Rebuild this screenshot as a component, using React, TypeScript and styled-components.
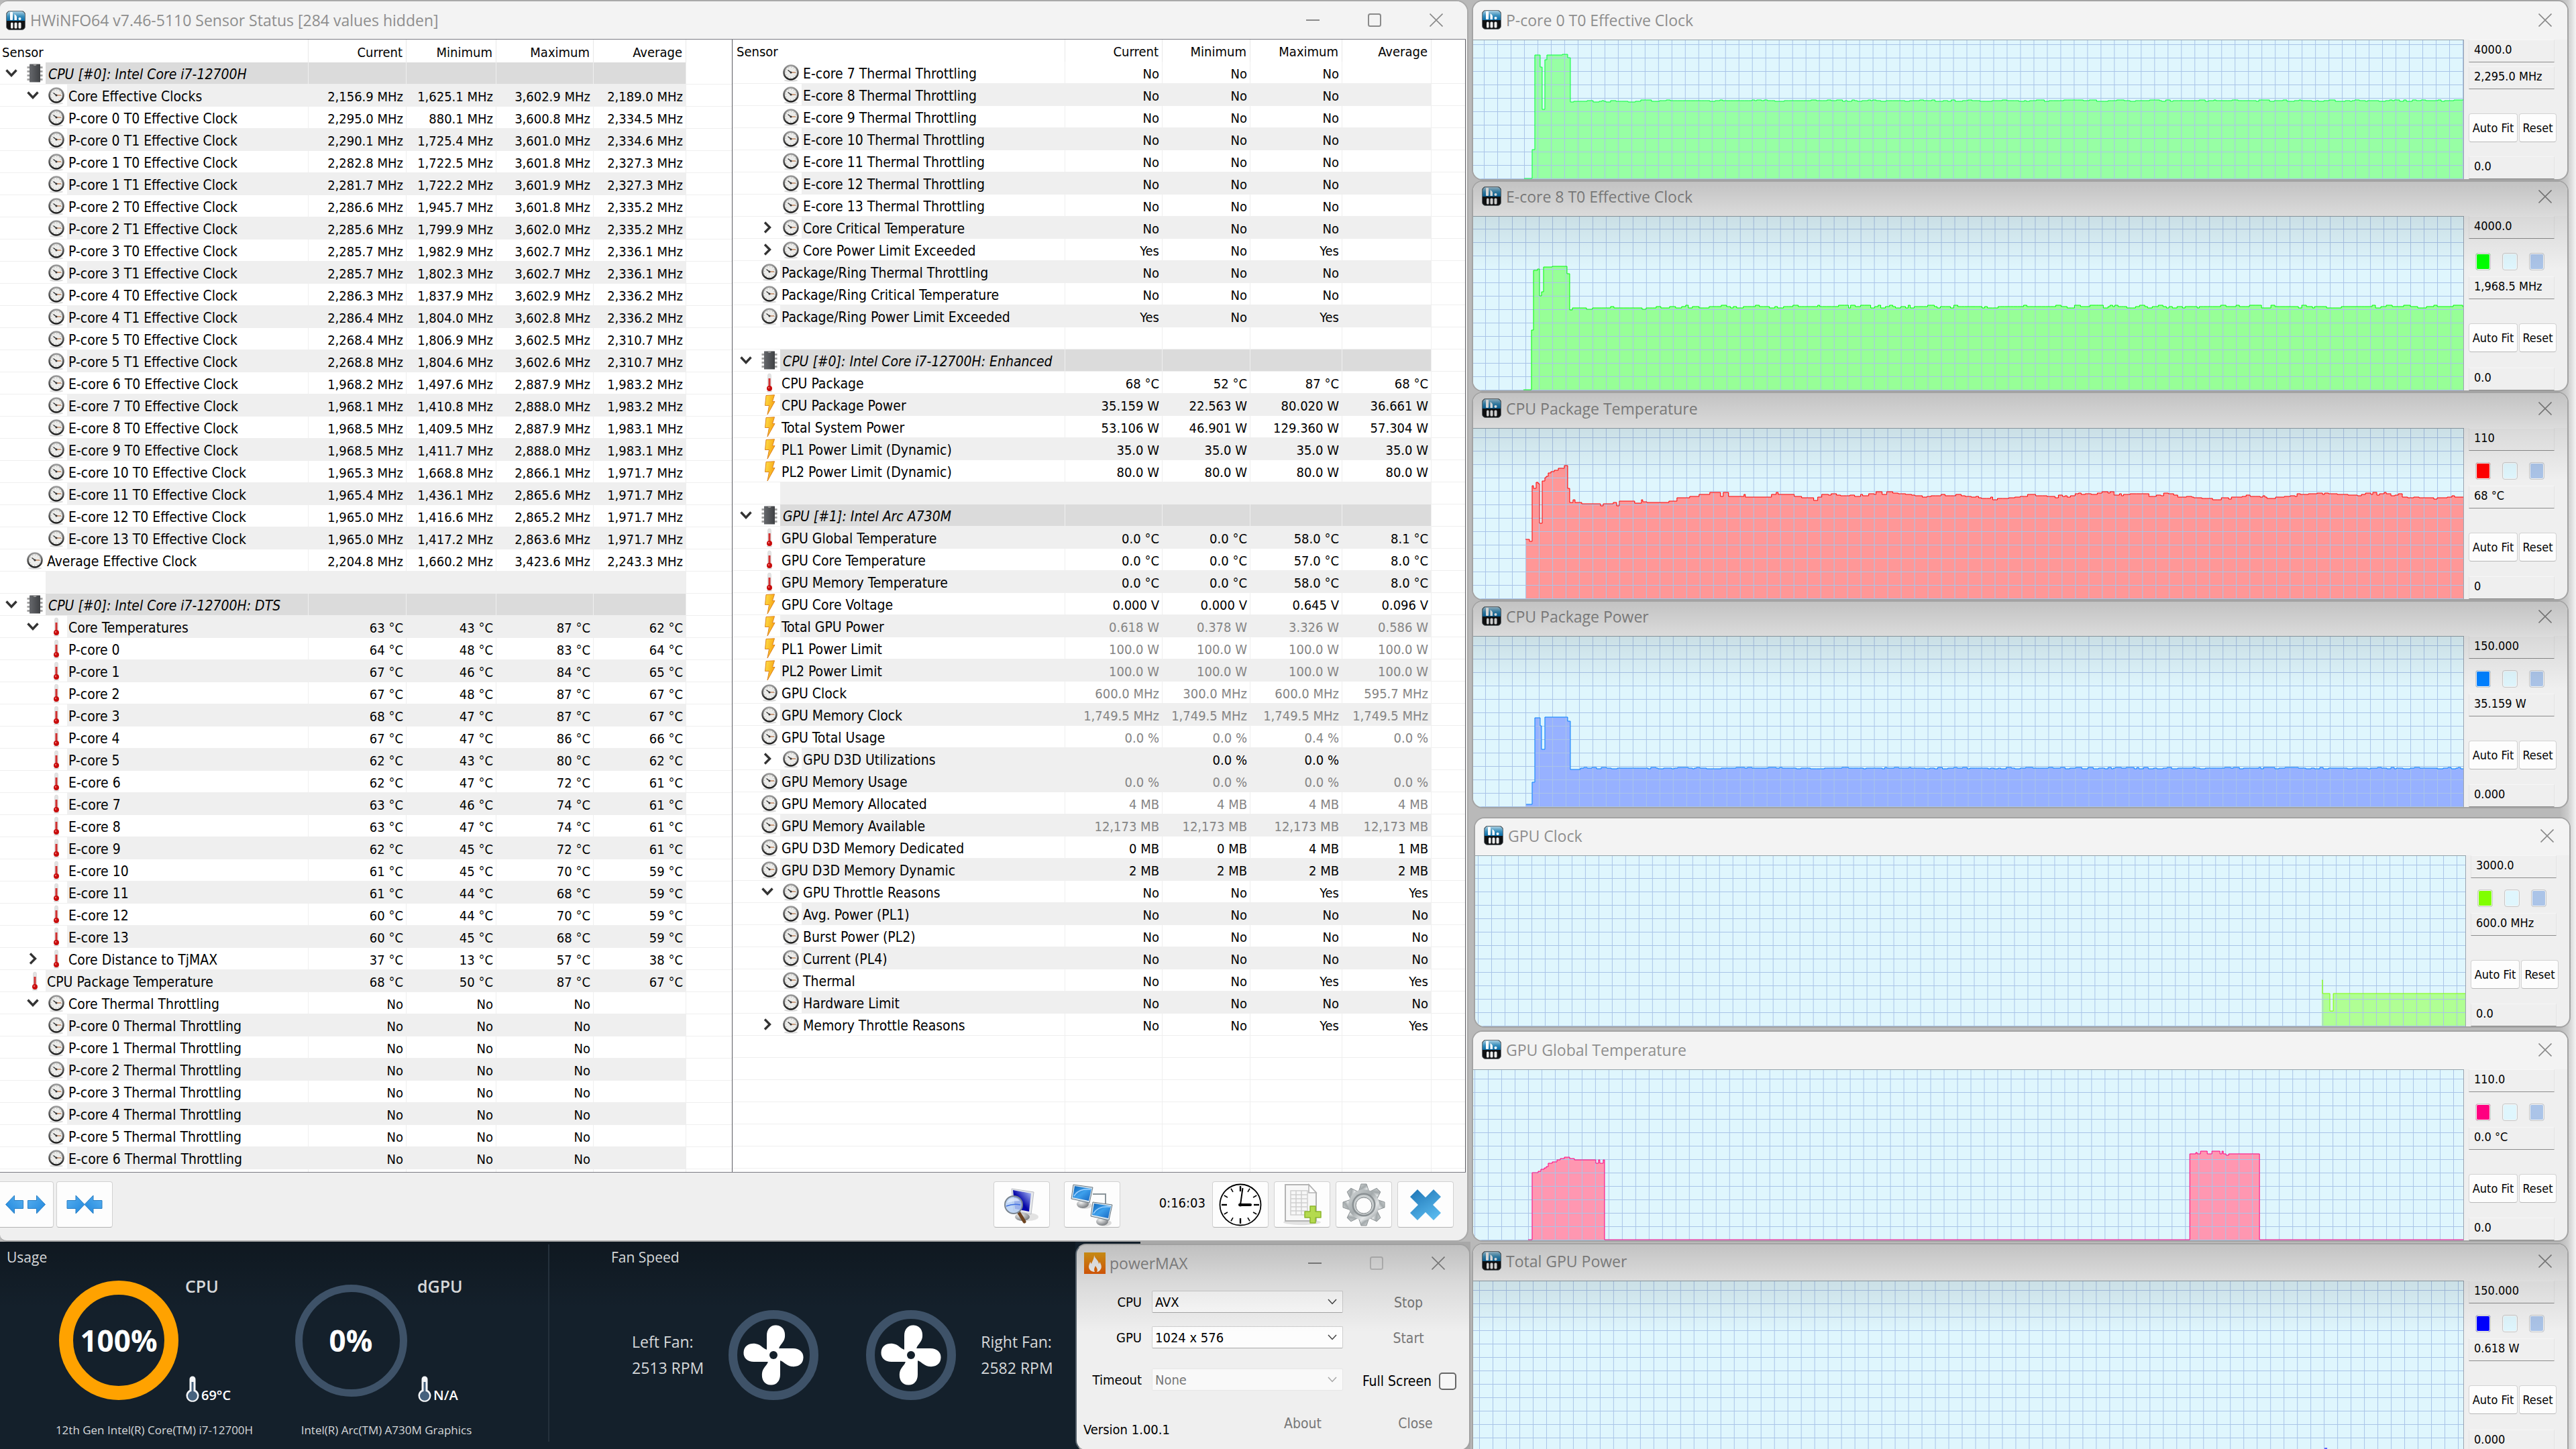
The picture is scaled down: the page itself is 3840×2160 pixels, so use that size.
import React from "react";
import styled, { createGlobalStyle, css } from "styled-components";

const uiFont = '"DejaVu Sans Condensed", Tahoma, "Noto Sans", sans-serif';
const titleFont = '"Open Sans", "Segoe UI", "Noto Sans", sans-serif';

const GlobalStyle = createGlobalStyle`
  *, *::before, *::after { box-sizing: border-box; }
  body { margin: 0; background: #b9b9b9; font-family: ${uiFont}; font-size: 20px; color: #000; }
  button, select, input { font: inherit; color: inherit; margin: 0; }
  svg { display: block; flex: none; }
`;

/* ---------- page ---------- */

const Desktop = styled.div`
  display: grid;
  grid-template-columns: 73fr 55fr;
  min-height: 100vh;
  overflow: hidden;
`;

const LeftColumn = styled.div`
  display: flex;
  flex-direction: column;
  min-width: 0;
`;

const RightColumn = styled.div`
  display: flex;
  flex-direction: column;
  min-width: 0;
  padding: 0 11px 0 4px;
  background: linear-gradient(to left, #f4f4f4 0, #cdcdcd 12px, #b9b9b9 24px);
`;

const Defs = styled.svg`
  position: absolute;
  width: 0;
  height: 0;
`;

/* ---------- shared window parts ---------- */

const TitleText = styled.h2`
  margin: 0;
  flex: 1;
  font: 400 23px/28px ${titleFont};
  color: #8e8e8e;
  white-space: nowrap;
`;

const Captions = styled.div`
  display: flex;
`;

const CaptionButton = styled.button<{ $width?: number }>`
  width: ${(p) => p.$width ?? 92}px;
  height: 28px;
  padding: 0;
  border: 0;
  background: none;
  display: flex;
  align-items: center;
  justify-content: center;
`;

const TopShade = css`
  &::after {
    content: "";
    position: absolute;
    inset: 0;
    pointer-events: none;
    background: linear-gradient(to bottom, rgba(0, 0, 0, 0.2), rgba(0, 0, 0, 0.09) 56px, rgba(0, 0, 0, 0) 130px);
  }
`;

/* ---------- main sensor window ---------- */

const MainWindow = styled.main`
  margin-right: 1px;
  border: 2px solid #a9a9a9;
  border-left: 0;
  border-radius: 12px 18px 18px 10px;
  background: #efefef;
  overflow: hidden;
`;

const MainTitle = styled.header`
  display: flex;
  align-items: center;
  gap: 7px;
  height: 56px;
  padding-left: 9px;
  background: #f3f3f3;
`;

const Panes = styled.div`
  display: grid;
  grid-template-columns: 1091fr 1094fr;
  margin-right: 2px;
  border-top: 1px solid #7b7b83;
  border-bottom: 1px solid #7b7b83;
  background: #fff;
`;

const Pane = styled.section<{ $framed?: boolean }>`
  min-width: 0;
  overflow: hidden;
  ${(p) => p.$framed && css`
    border-left: 1px solid #5c5c62;
    border-right: 1px solid #5c5c62;
  `}
`;

const SensorTable = styled.table<{ $headHeight: number; $tail: number }>`
  width: 100%;
  table-layout: fixed;
  border-collapse: separate;
  border-spacing: 0;
  line-height: 32px;
  thead tr { height: ${(p) => p.$headHeight}px; }
  tfoot tr { height: ${(p) => p.$tail}px; }
`;

const HeadCell = styled.th<{ $start?: number }>`
  padding: 3px 5px 0 ${(p) => p.$start ?? 0}px;
  font-weight: 400;
  text-align: ${(p) => (p.$start === undefined ? "right" : "left")};
  border-right: 1px solid #e8e8e8;
  line-height: 28px;
`;

type Tone = "plain" | "stripe" | "group";
const toneColor: Record<Tone, string> = { plain: "#ffffff", stripe: "#efefef", group: "#dbdbdb" };

const Row = styled.tr`
  height: 33px;
`;

const NameCell = styled.td`
  padding: 0;
  height: 33px;
  border-bottom: 1px solid #efefef;
`;

const NameLine = styled.div`
  display: flex;
  height: 32px;
`;

const Gutter = styled.div<{ $width: number }>`
  flex: none;
  width: ${(p) => p.$width}px;
  padding-right: 4px;
  display: flex;
  justify-content: flex-end;
  align-items: center;
`;

const IconSlot = styled.span`
  width: 24px;
  display: flex;
  justify-content: center;
`;

const Twisty = styled.button`
  width: 22px;
  height: 28px;
  margin-right: 12px;
  padding: 0;
  border: 0;
  background: none;
  display: flex;
  align-items: center;
  justify-content: center;
`;

const Label = styled.div<{ $tone: Tone }>`
  flex: 1;
  min-width: 0;
  padding-left: ${(p) => (p.$tone === "group" ? 4 : 2)}px;
  border-right: 1px solid #efefef;
  background: ${(p) => toneColor[p.$tone]};
  font-size: 21px;
  line-height: 36px;
  font-style: ${(p) => (p.$tone === "group" ? "italic" : "normal")};
  white-space: nowrap;
  overflow: hidden;
`;

const ValueCell = styled.td<{ $tone: Tone; $dim?: boolean }>`
  padding: 4px 4px 0 0;
  text-align: right;
  white-space: nowrap;
  line-height: 28px;
  color: ${(p) => (p.$dim ? "#858585" : "#000")};
  background: ${(p) => toneColor[p.$tone]};
  border-right: 1px solid #efefef;
  border-bottom: 1px solid #efefef;
`;

const SpareCell = styled.td`
  padding: 0;
  border-bottom: 1px solid #efefef;
`;

const TailCell = styled.td`
  padding: 0;
  border-right: 1px solid #efefef;
  &:last-child { border-right: 0; }
`;

const Toolbar = styled.footer`
  display: flex;
  align-items: center;
  justify-content: space-between;
  height: 101px;
  padding: 0 20px 6px 0;
`;

const ToolGroup = styled.div<{ $gap: number }>`
  display: flex;
  align-items: center;
  gap: ${(p) => p.$gap}px;
`;

const ToolButton = styled.button<{ $flush?: boolean }>`
  width: ${(p) => (p.$flush ? 80 : 84)}px;
  height: 69px;
  padding: 0 ${(p) => (p.$flush ? 4 : 0)}px 0 0;
  border: 1px solid #d2d2d2;
  border-bottom-color: #b4b4b4;
  border-left-width: ${(p) => (p.$flush ? 0 : 1)}px;
  border-radius: ${(p) => (p.$flush ? "0 4px 4px 0" : "4px")};
  background: #fdfdfd;
  display: flex;
  align-items: center;
  justify-content: center;
`;

const Elapsed = styled.time`
  padding: 0 2px 6px 50px;
`;

/* ---------- dark control centre ---------- */

const Lower = styled.div`
  position: relative;
  z-index: 1;
  flex: 1;
  display: flex;
  margin-right: -2px;
  background: linear-gradient(to right, #14202b 1700px, #a8a8a8 1700px);
`;

const Control = styled.section`
  flex: 1;
  display: grid;
  grid-template-columns: 819px 1fr;
  padding: 4px 0 16px;
  color: #d6d8da;
  font-family: ${titleFont};
  background: linear-gradient(to bottom, rgba(0, 0, 0, 0.25), rgba(0, 0, 0, 0) 100px);
`;

const ControlPart = styled.div<{ $inset: number; $ruled?: boolean }>`
  border-right: ${(p) => (p.$ruled ? "2px solid #25313c" : "0")};
  h3 {
    margin: 4px 0 0 ${(p) => p.$inset}px;
    font: 400 21px/30px ${titleFont};
  }
`;

const Gauges = styled.div`
  display: flex;
  gap: 62px;
  padding: 14px 0 0 88px;
`;

const Gauge = styled.figure`
  margin: 0;
  width: 284px;
  display: flex;
  flex-direction: column;
  align-items: center;
  gap: 27px;
  figcaption { font-size: 17px; line-height: 24px; white-space: nowrap; }
`;

const GaugeTop = styled.div`
  align-self: stretch;
  display: flex;
  align-items: center;
  gap: 10px;
`;

const GaugeSide = styled.div`
  height: 190px;
  display: flex;
  flex-direction: column;
  justify-content: space-between;
  strong { font-weight: 600; font-size: 25px; line-height: 28px; }
`;

const Heat = styled.span`
  display: flex;
  align-items: flex-end;
  gap: 2px;
  font-weight: 600;
  font-size: 20px;
  line-height: 26px;
  color: #fff;
`;

const Ring = styled.div<{ $size: number; $stroke: number; $color: string }>`
  width: ${(p) => p.$size}px;
  height: ${(p) => p.$size}px;
  border: ${(p) => p.$stroke}px solid ${(p) => p.$color};
  border-radius: 50%;
  display: flex;
  align-items: center;
  justify-content: center;
  font-weight: 700;
  font-size: 44px;
  color: #fff;
`;

const RingSlot = styled.div`
  width: 178px;
  display: flex;
  justify-content: center;
`;

const Fans = styled.div`
  display: flex;
  align-items: center;
  gap: 37px;
  padding: 64px 0 0 123px;
`;

const FanReading = styled.p`
  margin: 0;
  font-size: 23px;
  line-height: 39px;
  white-space: nowrap;
`;

const FanPair = styled.div`
  display: flex;
  gap: 71px;
`;

/* ---------- powerMAX ---------- */

const PowerWindow = styled.section`
  position: relative;
  width: 589px;
  margin: 3px 0 2px;
  border: 2px solid #a0a0a0;
  border-left-color: #55606a;
  border-radius: 16px;
  background: #efefef;
  overflow: hidden;
  ${TopShade}
`;

const PowerTitle = styled.header`
  display: flex;
  align-items: center;
  gap: 6px;
  height: 52px;
  padding: 2px 0 0 11px;
`;

const PowerForm = styled.form``;

const FormRows = styled.div<{ $above: number }>`
  display: grid;
  grid-template-columns: 97px 285px 1fr;
  grid-auto-rows: 33px;
  gap: 20px 15px;
  padding: ${(p) => p.$above}px 8px 0 0;
  align-items: center;
`;

const FieldLabel = styled.label`
  text-align: right;
`;

const SelectBox = styled.div<{ $off?: boolean }>`
  position: relative;
  svg { position: absolute; right: 9px; top: 12px; opacity: ${(p) => (p.$off ? 0.45 : 1)}; }
`;

const Select = styled.select`
  appearance: none;
  width: 100%;
  height: 33px;
  padding: 0 0 0 4px;
  border: 1px solid #cfcfcf;
  border-bottom-color: #a9a9a9;
  border-radius: 2px;
  background: #fdfdfd;
  &:disabled { color: #777; opacity: 1; border-color: #e6e6e6; background: #f9f9f9; }
`;

const TextButton = styled.button`
  justify-self: center;
  padding: 2px 8px 0;
  border: 0;
  background: none;
  color: #777;
  font-size: 21px;
`;

const CheckLine = styled.label`
  display: flex;
  align-items: center;
  justify-content: flex-end;
  gap: 11px;
  padding: 5px 11px 0 0;
  font-size: 21px;
  white-space: nowrap;
`;

const CheckBox = styled.input`
  appearance: none;
  width: 26px;
  height: 26px;
  border: 2px solid #666;
  border-radius: 5px;
  background: #f6f6f6;
`;

const PowerFooter = styled.footer`
  display: grid;
  grid-template-columns: 214px 110px 110px;
  column-gap: 58px;
  align-items: center;
  padding: 26px 0 0 10px;
  span { padding-top: 20px; }
`;

/* ---------- graph windows ---------- */

const GraphWindow = styled.section<{ $shade?: boolean; $after: number; $shift?: boolean; $fill?: boolean }>`
  position: relative;
  margin: 0 ${(p) => (p.$shift ? -3 : 0)}px ${(p) => p.$after}px ${(p) => (p.$shift ? 3 : 0)}px;
  border: 2px solid #a3a3a3;
  border-radius: 16px;
  background: #efefef;
  overflow: hidden;
  ${(p) => p.$fill && css`
    flex: 1;
    display: flex;
    flex-direction: column;
    border-bottom: 0;
    border-radius: 16px 16px 0 0;
  `}
  ${(p) => p.$shade && TopShade}
`;

const GraphTitle = styled.header<{ $height: number }>`
  display: flex;
  align-items: flex-end;
  gap: 7px;
  height: ${(p) => p.$height}px;
  padding: 0 0 15px 13px;
  background: #f3f3f3;
`;

const GraphBody = styled.div<{ $height?: number }>`
  display: flex;
  ${(p) => (p.$height ? `height: ${p.$height}px;` : "flex: 1; min-height: 0;")}
`;

const Plot = styled.div`
  flex: 1;
  min-width: 0;
  border-top: 1px solid #93a2aa;
  border-right: 1px solid #9aa4b0;
  background: #dff6fd;
  overflow: hidden;
  svg { width: 100%; }
`;

const Side = styled.div`
  width: 154px;
  padding-left: 7px;
  display: flex;
  flex-direction: column;
  font-size: 18px;
`;

const Reading = styled.input<{ $top?: number; $push?: boolean }>`
  width: 128px;
  height: 34px;
  margin-top: ${(p) => (p.$push ? "auto" : `${p.$top ?? 0}px`)};
  padding: 0 0 6px 7px;
  border: 1px solid #e4e4e4;
  border-top-color: #f6f6f6;
  border-bottom: 1px solid #8c8c8c;
  background: transparent;
`;

const Swatches = styled.div<{ $top: number }>`
  display: flex;
  gap: 17px;
  margin-top: ${(p) => p.$top}px;
  padding-left: 10px;
`;

const Swatch = styled.button<{ $color: string }>`
  width: 23px;
  height: 26px;
  padding: 0;
  border: 1px solid #c8c8c8;
  border-radius: 4px;
  background: ${(p) => p.$color};
  box-shadow: inset 0 0 0 1px #f4f4f4;
`;

const SideButtons = styled.div`
  display: flex;
  gap: 2px;
  margin-top: 36px;
`;

const SideButton = styled.button<{ $width: number }>`
  width: ${(p) => p.$width}px;
  height: 43px;
  padding: 0;
  border: 1px solid #d2d2d2;
  border-bottom-color: #b8b8b8;
  border-radius: 4px;
  background: #fdfdfd;
  white-space: nowrap;
`;

/* ---------- drawings ---------- */

const SharedDefs = () => (
  <Defs aria-hidden="true">
    <defs>
      <linearGradient id="appTop" x1="0" y1="0" x2="0" y2="1">
        <stop offset="0" stopColor="#a9cfe2" /><stop offset="0.5" stopColor="#3c90bd" /><stop offset="1" stopColor="#0a6ba6" />
      </linearGradient>
      <linearGradient id="clockRim" x1="0" y1="0" x2="0" y2="1">
        <stop offset="0" stopColor="#9a9a9a" /><stop offset="1" stopColor="#1e1e1e" />
      </linearGradient>
      <linearGradient id="bolt" x1="0" y1="0" x2="1" y2="0.4">
        <stop offset="0" stopColor="#ffe14a" /><stop offset="1" stopColor="#f6a313" />
      </linearGradient>
      <linearGradient id="chip" x1="0" y1="0" x2="1" y2="0">
        <stop offset="0" stopColor="#66686c" /><stop offset="1" stopColor="#3f4144" />
      </linearGradient>
      <linearGradient id="deepScreen" x1="0" y1="1" x2="1" y2="0">
        <stop offset="0" stopColor="#0a12c8" /><stop offset="0.45" stopColor="#0404a8" /><stop offset="1" stopColor="#b9ccff" />
      </linearGradient>
      <linearGradient id="skyScreen" x1="0" y1="0" x2="1" y2="1">
        <stop offset="0" stopColor="#0d63b8" /><stop offset="0.5" stopColor="#3da0ec" /><stop offset="1" stopColor="#1565c0" />
      </linearGradient>
      <radialGradient id="metalBall" cx="0.35" cy="0.3" r="0.8">
        <stop offset="0" stopColor="#f1f1f1" /><stop offset="1" stopColor="#6b6f73" />
      </radialGradient>
      <linearGradient id="gear" x1="0" y1="0" x2="1" y2="1">
        <stop offset="0" stopColor="#d5d9da" /><stop offset="0.45" stopColor="#a3a9ab" /><stop offset="0.7" stopColor="#e4e7e8" /><stop offset="1" stopColor="#8b9194" />
      </linearGradient>
      <linearGradient id="cross" x1="0" y1="0" x2="0.6" y2="1">
        <stop offset="0" stopColor="#1c73b4" /><stop offset="1" stopColor="#57b7ec" />
      </linearGradient>
      <linearGradient id="flame" x1="0" y1="0" x2="0" y2="1">
        <stop offset="0" stopColor="#f0a818" /><stop offset="1" stopColor="#e85e08" />
      </linearGradient>
      <linearGradient id="arrow" x1="0" y1="0" x2="1" y2="1">
        <stop offset="0" stopColor="#58b0f0" /><stop offset="1" stopColor="#1f86dc" />
      </linearGradient>
    </defs>
  </Defs>
);

const AppLogo = () => (
  <svg width="29" height="29" viewBox="0 0 29 29" aria-hidden="true">
    <rect x="0.5" y="0.5" width="28" height="28" rx="5" fill="#101214" stroke="#6a7074" />
    <path d="M1 15V6a5 5 0 0 1 5-5h17a5 5 0 0 1 5 5v9z" fill="url(#appTop)" />
    <rect x="6" y="2" width="4" height="12" rx="1" fill="#fff" />
    <path d="M12.500 5v9h3.500V9l-1-2z" fill="#fff" />
    <circle cx="20.500" cy="12" r="2" fill="#fff" />
    <rect x="7" y="17.500" width="3.500" height="9" rx="1.500" fill="#f0f0f0" />
    <rect x="12.500" y="17.500" width="4" height="9" rx="1.500" fill="#f0f0f0" />
    <rect x="18.500" y="17.500" width="4" height="9" rx="1.500" fill="#f0f0f0" />
  </svg>
);

const ClockIcon = () => (
  <svg width="24" height="27" viewBox="0 0 24 27" aria-hidden="true">
    <ellipse cx="12" cy="25" rx="10" ry="1.800" fill="#dcdcdc" />
    <circle cx="12" cy="13" r="10.500" fill="#ececea" stroke="url(#clockRim)" strokeWidth="2.600" />
    <circle cx="12" cy="13" r="7.800" fill="none" stroke="#8f8f8f" strokeWidth="1" strokeDasharray="1 3.080" />
    <path d="M7.500 9.500L12 13" stroke="#333" strokeWidth="1.500" />
    <path d="M12 13h7" stroke="#c0845c" strokeWidth="1.500" />
    <circle cx="12" cy="13" r="1.500" fill="#333" />
  </svg>
);

const ThermoIcon = () => (
  <svg width="10" height="29" viewBox="0 0 10 29" aria-hidden="true">
    <ellipse cx="5" cy="27.500" rx="4" ry="1.200" fill="#d8d8d8" />
    <rect x="2.500" y="1" width="5" height="21" rx="2.500" fill="#e2e2e2" stroke="#cfcfcf" strokeWidth="0.500" />
    <rect x="3.500" y="8" width="3" height="15" fill="#d03030" />
    <circle cx="5" cy="23" r="4" fill="#c80c0c" />
    <circle cx="4" cy="22" r="1.200" fill="#e86a6a" />
  </svg>
);

const BoltIcon = () => (
  <svg width="17" height="31" viewBox="0 0 17 31" aria-hidden="true">
    <path d="M3 1.500L15.500 0.800L12.500 10.500H16L5 30L7.500 16.500H1.500z" fill="url(#bolt)" stroke="#dd8420" strokeWidth="1" strokeLinejoin="round" />
  </svg>
);

const ChipIcon = () => (
  <svg width="24" height="28" viewBox="0 0 24 28" aria-hidden="true">
    {[4, 10, 16, 22].map((y) => (
      <g key={y} fill="#a2a2a2">
        <rect x="0.500" y={y} width="5" height="3" />
        <rect x="18.500" y={y} width="5" height="3" />
      </g>
    ))}
    <rect x="4" y="0.500" width="16" height="27" rx="0.500" fill="url(#chip)" />
    <path d="M9.500 0.500a2.500 2.500 0 0 0 5 0z" fill="#9a9a9a" />
  </svg>
);

const DownChevron = () => (
  <svg width="20" height="16" viewBox="0 0 20 16" aria-hidden="true">
    <path d="M2.500 3.500L10 11.500L17.500 3.500" fill="none" stroke="#333" strokeWidth="3.400" />
  </svg>
);

const RightChevron = () => (
  <svg width="16" height="20" viewBox="0 0 16 20" aria-hidden="true">
    <path d="M4 2.500L11.500 10L4 17.500" fill="none" stroke="#333" strokeWidth="3.400" />
  </svg>
);

const CloseGlyph = () => (
  <svg width="20" height="20" viewBox="0 0 20 20" aria-hidden="true">
    <path d="M0.500 0.500L19.500 19.500M19.500 0.500L0.500 19.500" stroke="#8a8a8a" strokeWidth="1.600" />
  </svg>
);
const MinGlyph = () => (
  <svg width="20" height="20" viewBox="0 0 20 20" aria-hidden="true"><path d="M0 10h20" stroke="#8a8a8a" strokeWidth="2" /></svg>
);
const MaxGlyph = ({ faint }: { faint?: boolean }) => (
  <svg width="20" height="20" viewBox="0 0 20 20" aria-hidden="true">
    <rect x="1" y="1" width="18" height="18" rx="2.500" fill="none" stroke={faint ? "#c6c6c6" : "#8a8a8a"} strokeWidth="2" />
  </svg>
);

const arrowRight = "M0 8.500H13V1L26 14.500L13 28V20.500H0z";
const ExpandIcon = () => (
  <svg width="62" height="30" viewBox="0 0 62 30" aria-hidden="true">
    <g fill="url(#arrow)" stroke="#2a7fc4" strokeWidth="1">
      <path d={arrowRight} transform="translate(27.500 0) scale(-1 1)" /><path d={arrowRight} transform="translate(34.500 0)" />
    </g>
  </svg>
);
const ShrinkIcon = () => (
  <svg width="54" height="30" viewBox="0 0 54 30" aria-hidden="true">
    <g fill="url(#arrow)" stroke="#2a7fc4" strokeWidth="1">
      <path d={arrowRight} transform="translate(1 0)" /><path d={arrowRight} transform="translate(53 0) scale(-1 1)" />
    </g>
  </svg>
);

const SearchMonitorIcon = () => (
  <svg width="64" height="64" viewBox="0 0 64 64" aria-hidden="true">
    <ellipse cx="42" cy="50" rx="15" ry="6" fill="#e2e2e2" />
    <ellipse cx="33" cy="50" rx="11" ry="6" fill="url(#metalBall)" />
    <path d="M17 8L50 13L46 46L20 41z" fill="#e6e8ec" stroke="#b9bcc2" />
    <path d="M19 10L46 15L43 42L22 38z" fill="url(#deepScreen)" />
    <path d="M28 44L36 57" stroke="#6d4420" strokeWidth="5" strokeLinecap="round" />
    <circle cx="20" cy="32" r="13" fill="#b5cff3" fillOpacity="0.850" stroke="#7a8590" strokeWidth="2" />
    <path d="M10 29a11 11 0 0 1 19-3q-9 0-19 3z" fill="#eaf2ff" fillOpacity="0.700" />
    <path d="M9 34q10-4 21-2" fill="none" stroke="#3f6fe0" strokeWidth="1.500" />
  </svg>
);

const MiniMonitor = ({ x, y }: { x: number; y: number }) => (
  <g transform={`translate(${x} ${y})`}>
    <ellipse cx="20" cy="31" rx="11" ry="5" fill="#dadada" />
    <ellipse cx="17" cy="29" rx="9" ry="6" fill="url(#metalBall)" />
    <path d="M3 0L32 4L27 27L0 21z" fill="#dbe6ee" stroke="#66757f" />
    <path d="M5 2L30 6L26 24L2 19z" fill="url(#skyScreen)" />
    <path d="M4 17Q11 5 29 7" fill="none" stroke="#9fd2ff" strokeWidth="1.500" />
  </g>
);
const NetworkIcon = () => (
  <svg width="64" height="64" viewBox="0 0 64 64" aria-hidden="true">
    <path d="M33 16H52V30" fill="none" stroke="#8a949a" strokeWidth="2" />
    <MiniMonitor x={1} y={2} />
    <MiniMonitor x={30} y={28} />
  </svg>
);

const BigClockIcon = () => (
  <svg width="64" height="64" viewBox="0 0 64 64" aria-hidden="true">
    <circle cx="32" cy="32" r="30.500" fill="#fff" stroke="#000" strokeWidth="1.800" />
    {Array.from({ length: 12 }, (_, i) => (
      <path key={i} d={i % 3 === 0 ? "M32 4V12" : "M32 4V10"} stroke="#000" strokeWidth={i % 3 === 0 ? 2.4 : 1.6} transform={`rotate(${i * 30} 32 32)`} />
    ))}
    <path d="M32 32L35.500 7" stroke="#000" strokeWidth="2" />
    <path d="M31 32H47" stroke="#000" strokeWidth="4" strokeLinecap="round" />
    <circle cx="32" cy="32" r="2.500" />
  </svg>
);

const ReportIcon = () => (
  <svg width="64" height="64" viewBox="0 0 64 64" aria-hidden="true">
    <ellipse cx="32" cy="58" rx="28" ry="4" fill="#e2e2e2" />
    <path d="M7 2H42L53 14V56H7z" fill="#f7f7f7" stroke="#b4b4b4" strokeWidth="2" />
    <path d="M42 2V14H53z" fill="#fff" stroke="#b4b4b4" strokeWidth="1.500" />
    <g stroke="#cfcfcf" strokeWidth="1.500" fill="none">
      <rect x="15" y="11" width="25" height="36" />
      <path d="M15 17H40M15 23H40M15 29H40M15 35H40M15 41H40M23 11V47M31 11V47" />
    </g>
    <path d="M44 34H52V42H60V51H52V59H44V51H36V42H44z" fill="#b4da4e" stroke="#8cb62c" strokeWidth="1.500" strokeLinejoin="round" />
  </svg>
);

const GearIcon = () => (
  <svg width="64" height="64" viewBox="0 0 64 64" aria-hidden="true">
    <g fill="url(#gear)" stroke="#8d9395" strokeWidth="1">
      {Array.from({ length: 8 }, (_, i) => (
        <path key={i} d="M24 13L28 1H36L40 13z" transform={`rotate(${i * 45} 32 32)`} />
      ))}
      <circle cx="32" cy="32" r="23" stroke="none" />
    </g>
    <circle cx="32" cy="32" r="17.500" fill="#8a9093" />
    <circle cx="32" cy="32" r="15" fill="#c9cecf" />
    <circle cx="32" cy="33" r="12" fill="#fdfdfd" stroke="#7c8285" strokeWidth="1" />
  </svg>
);

const CrossIcon = () => (
  <svg width="48" height="48" viewBox="0 0 48 48" aria-hidden="true">
    <path d="M12 1L24 13L36 1L47 12L35 24L47 36L36 47L24 35L12 47L1 36L13 24L1 12z" fill="url(#cross)" />
  </svg>
);

const FlameIcon = () => (
  <svg width="32" height="32" viewBox="0 0 32 32" aria-hidden="true">
    <rect width="32" height="32" fill="url(#flame)" />
    <path d="M15 4c1 5 7 8 7 13 1-1 1-2 1-3 3 4 4 9 1 12-1 2-3 3-5 3 2-3 0-6-2-9-1 2-3 5-1 9-6 0-9-4-9-8 0-3 2-5 2-7 1 1 1 2 2 3 1-4 4-7 4-13z" fill="#fff" />
  </svg>
);

const SelectArrow = () => (
  <svg width="14" height="9" viewBox="0 0 14 9" aria-hidden="true">
    <path d="M1 1L7 7.500L13 1" fill="none" stroke="#444" strokeWidth="1.500" />
  </svg>
);

const TubeIcon = () => (
  <svg width="22" height="43" viewBox="0 0 22 43" aria-hidden="true">
    <path d="M6.500 6a4.500 4.500 0 0 1 9 0V22a9.500 9.500 0 1 1-9 0z" fill="#f4f6f8" />
    <path d="M9.500 10h3V24a7 7 0 1 1-3 0z" fill="#46627e" />
  </svg>
);

const FanIcon = () => (
  <svg width="134" height="134" viewBox="0 0 134 134" aria-hidden="true">
    <circle cx="67" cy="67" r="60.500" fill="none" stroke="#3e5268" strokeWidth="13" />
    {[0, 90, 180, 270].map((a) => (
      <path key={a} d="M57 68V38C57 28 63 22 71 22.500C81 23 85 31 84 40C83 49 75 52 75 59C75 63 76 65 77 68z" fill="#fff" transform={`rotate(${a} 67 67)`} />
    ))}
    <circle cx="67" cy="67" r="6" fill="#14202b" />
  </svg>
);

/* ---------- sensor data ---------- */

type Kind = "clock" | "temp" | "bolt" | "chip";
interface Sensor {
  name: string;
  kind?: Kind;
  level?: 1 | 2;
  twisty?: "open" | "shut";
  group?: boolean;
  dim?: boolean;
  /** repeats the previous stripe after an odd number of collapsed children */
  flip?: boolean;
  values: string[];
}

const group = (name: string): Sensor => ({ name, kind: "chip", level: 1, twisty: "open", group: true, values: ["", "", "", ""] });
const blank: Sensor = { name: "", level: 1, values: ["", "", "", ""] };
const withUnit = (raw: string, unit: string) => raw.split(" ").map((v) => `${v} ${unit}`);
const mhz = (name: string, raw: string, extra: Partial<Sensor> = {}): Sensor => ({ name, kind: "clock", level: 2, values: withUnit(raw, "MHz"), ...extra });
const deg = (name: string, raw: string, extra: Partial<Sensor> = {}): Sensor => ({ name, kind: "temp", level: 2, values: withUnit(raw, "°C"), ...extra });
const watt = (name: string, raw: string, extra: Partial<Sensor> = {}): Sensor => ({ name, kind: "bolt", level: 1, values: withUnit(raw, "W"), ...extra });
const flag = (name: string, raw = "No No No", extra: Partial<Sensor> = {}): Sensor => ({ name, kind: "clock", level: 2, values: [...raw.split(" "), "", ""].slice(0, 4), ...extra });

const leftSensors: Sensor[] = [
  group("CPU [#0]: Intel Core i7-12700H"),
  mhz("Core Effective Clocks", "2,156.9 1,625.1 3,602.9 2,189.0", { twisty: "open" }),
  mhz("P-core 0 T0 Effective Clock", "2,295.0 880.1 3,600.8 2,334.5"),
  mhz("P-core 0 T1 Effective Clock", "2,290.1 1,725.4 3,601.0 2,334.6"),
  mhz("P-core 1 T0 Effective Clock", "2,282.8 1,722.5 3,601.8 2,327.3"),
  mhz("P-core 1 T1 Effective Clock", "2,281.7 1,722.2 3,601.9 2,327.3"),
  mhz("P-core 2 T0 Effective Clock", "2,286.6 1,945.7 3,601.8 2,335.2"),
  mhz("P-core 2 T1 Effective Clock", "2,285.6 1,799.9 3,602.0 2,335.2"),
  mhz("P-core 3 T0 Effective Clock", "2,285.7 1,982.9 3,602.7 2,336.1"),
  mhz("P-core 3 T1 Effective Clock", "2,285.7 1,802.3 3,602.7 2,336.1"),
  mhz("P-core 4 T0 Effective Clock", "2,286.3 1,837.9 3,602.9 2,336.2"),
  mhz("P-core 4 T1 Effective Clock", "2,286.4 1,804.0 3,602.8 2,336.2"),
  mhz("P-core 5 T0 Effective Clock", "2,268.4 1,806.9 3,602.5 2,310.7"),
  mhz("P-core 5 T1 Effective Clock", "2,268.8 1,804.6 3,602.6 2,310.7"),
  mhz("E-core 6 T0 Effective Clock", "1,968.2 1,497.6 2,887.9 1,983.2"),
  mhz("E-core 7 T0 Effective Clock", "1,968.1 1,410.8 2,888.0 1,983.2"),
  mhz("E-core 8 T0 Effective Clock", "1,968.5 1,409.5 2,887.9 1,983.1"),
  mhz("E-core 9 T0 Effective Clock", "1,968.5 1,411.7 2,888.0 1,983.1"),
  mhz("E-core 10 T0 Effective Clock", "1,965.3 1,668.8 2,866.1 1,971.7"),
  mhz("E-core 11 T0 Effective Clock", "1,965.4 1,436.1 2,865.6 1,971.7"),
  mhz("E-core 12 T0 Effective Clock", "1,965.0 1,416.6 2,865.2 1,971.7"),
  mhz("E-core 13 T0 Effective Clock", "1,965.0 1,417.2 2,863.6 1,971.7"),
  mhz("Average Effective Clock", "2,204.8 1,660.2 3,423.6 2,243.3", { level: 1 }),
  blank,
  group("CPU [#0]: Intel Core i7-12700H: DTS"),
  deg("Core Temperatures", "63 43 87 62", { twisty: "open" }),
  deg("P-core 0", "64 48 83 64"),
  deg("P-core 1", "67 46 84 65"),
  deg("P-core 2", "67 48 87 67"),
  deg("P-core 3", "68 47 87 67"),
  deg("P-core 4", "67 47 86 66"),
  deg("P-core 5", "62 43 80 62"),
  deg("E-core 6", "62 47 72 61"),
  deg("E-core 7", "63 46 74 61"),
  deg("E-core 8", "63 47 74 61"),
  deg("E-core 9", "62 45 72 61"),
  deg("E-core 10", "61 45 70 59"),
  deg("E-core 11", "61 44 68 59"),
  deg("E-core 12", "60 44 70 59"),
  deg("E-core 13", "60 45 68 59"),
  deg("Core Distance to TjMAX", "37 13 57 38", { twisty: "shut" }),
  deg("CPU Package Temperature", "68 50 87 67", { level: 1 }),
  flag("Core Thermal Throttling", "No No No", { twisty: "open" }),
  ...[0, 1, 2, 3, 4, 5].map((n) => flag(`P-core ${n} Thermal Throttling`)),
  flag("E-core 6 Thermal Throttling"),
];

const rightSensors: Sensor[] = [
  ...[7, 8, 9, 10, 11, 12, 13].map((n) => flag(`E-core ${n} Thermal Throttling`)),
  flag("Core Critical Temperature", "No No No", { twisty: "shut" }),
  flag("Core Power Limit Exceeded", "Yes No Yes", { twisty: "shut" }),
  flag("Package/Ring Thermal Throttling", "No No No", { level: 1 }),
  flag("Package/Ring Critical Temperature", "No No No", { level: 1 }),
  flag("Package/Ring Power Limit Exceeded", "Yes No Yes", { level: 1 }),
  blank,
  group("CPU [#0]: Intel Core i7-12700H: Enhanced"),
  deg("CPU Package", "68 52 87 68", { level: 1 }),
  watt("CPU Package Power", "35.159 22.563 80.020 36.661"),
  watt("Total System Power", "53.106 46.901 129.360 57.304"),
  watt("PL1 Power Limit (Dynamic)", "35.0 35.0 35.0 35.0"),
  watt("PL2 Power Limit (Dynamic)", "80.0 80.0 80.0 80.0"),
  blank,
  group("GPU [#1]: Intel Arc A730M"),
  deg("GPU Global Temperature", "0.0 0.0 58.0 8.1", { level: 1 }),
  deg("GPU Core Temperature", "0.0 0.0 57.0 8.0", { level: 1 }),
  deg("GPU Memory Temperature", "0.0 0.0 58.0 8.0", { level: 1 }),
  { name: "GPU Core Voltage", kind: "bolt", level: 1, values: withUnit("0.000 0.000 0.645 0.096", "V") },
  watt("Total GPU Power", "0.618 0.378 3.326 0.586", { dim: true }),
  watt("PL1 Power Limit", "100.0 100.0 100.0 100.0", { dim: true }),
  watt("PL2 Power Limit", "100.0 100.0 100.0 100.0", { dim: true }),
  mhz("GPU Clock", "600.0 300.0 600.0 595.7", { level: 1, dim: true }),
  mhz("GPU Memory Clock", "1,749.5 1,749.5 1,749.5 1,749.5", { level: 1, dim: true }),
  { name: "GPU Total Usage", kind: "clock", level: 1, dim: true, values: withUnit("0.0 0.0 0.4 0.0", "%") },
  { name: "GPU D3D Utilizations", kind: "clock", level: 2, twisty: "shut", values: ["", "0.0 %", "0.0 %", ""] },
  { name: "GPU Memory Usage", kind: "clock", level: 1, dim: true, flip: true, values: withUnit("0.0 0.0 0.0 0.0", "%") },
  { name: "GPU Memory Allocated", kind: "clock", level: 1, dim: true, values: withUnit("4 4 4 4", "MB") },
  { name: "GPU Memory Available", kind: "clock", level: 1, dim: true, values: withUnit("12,173 12,173 12,173 12,173", "MB") },
  { name: "GPU D3D Memory Dedicated", kind: "clock", level: 1, values: withUnit("0 0 4 1", "MB") },
  { name: "GPU D3D Memory Dynamic", kind: "clock", level: 1, values: withUnit("2 2 2 2", "MB") },
  flag("GPU Throttle Reasons", "No No Yes Yes", { twisty: "open" }),
  flag("Avg. Power (PL1)", "No No No No"),
  flag("Burst Power (PL2)", "No No No No"),
  flag("Current (PL4)", "No No No No"),
  flag("Thermal", "No No Yes Yes"),
  flag("Hardware Limit", "No No No No"),
  flag("Memory Throttle Reasons", "No No Yes Yes", { twisty: "shut" }),
];

const icons: Record<Kind, React.ReactNode> = { clock: <ClockIcon />, temp: <ThermoIcon />, bolt: <BoltIcon />, chip: <ChipIcon /> };

interface ListProps {
  sensors: Sensor[];
  columns: number[];
  lead: number;
  headHeight: number;
  tail: number;
  emptyRows?: number;
}

const SensorList = ({ sensors, columns, lead, headHeight, tail, emptyRows = 0 }: ListProps) => {
  let striped = true;
  return (
    <SensorTable $headHeight={headHeight} $tail={tail}>
      <colgroup>
        {columns.map((w, i) => <col key={i} style={{ width: w }} />)}
        <col />
      </colgroup>
      <thead>
        <tr>
          <HeadCell scope="col" $start={lead + 3}>Sensor</HeadCell>
          {["Current", "Minimum", "Maximum", "Average"].map((h) => <HeadCell scope="col" key={h}>{h}</HeadCell>)}
          <td />
        </tr>
      </thead>
      <tbody>
        {sensors.map((s, i) => {
          striped = s.flip ? striped : !striped;
          const tone: Tone = s.group ? "group" : striped ? "stripe" : "plain";
          const level = s.level ?? 1;
          return (
            <Row key={i}>
              <NameCell>
                <NameLine>
                  <Gutter $width={lead + (level === 2 ? 100 : 68)}>
                    {s.twisty && (
                      <Twisty type="button" aria-label={s.twisty === "open" ? "Collapse" : "Expand"}>
                        {s.twisty === "open" ? <DownChevron /> : <RightChevron />}
                      </Twisty>
                    )}
                    {s.kind && <IconSlot>{icons[s.kind]}</IconSlot>}
                  </Gutter>
                  <Label $tone={tone}>{s.name}</Label>
                </NameLine>
              </NameCell>
              {s.values.map((v, k) => <ValueCell key={k} $tone={tone} $dim={s.dim}>{v}</ValueCell>)}
              <SpareCell />
            </Row>
          );
        })}
        {Array.from({ length: emptyRows }, (_, i) => (
          <Row key={`empty${i}`}>
            {[0, 1, 2, 3, 4].map((k) => <ValueCell key={k} $tone="plain" />)}
            <SpareCell />
          </Row>
        ))}
      </tbody>
      <tfoot>
        <tr>{[0, 1, 2, 3, 4, 5].map((k) => <TailCell key={k} />)}</tr>
      </tfoot>
    </SensorTable>
  );
};

/* ---------- graphs ---------- */

const PLOT_WIDTH = 1477;
type Point = [number, number];

/** Small jitter around a slowly moving level, sampled every few pixels. */
const jitter = (from: number, level: (x: number) => number, swing: number, seed: number): Point[] => {
  const points: Point[] = [];
  let state = seed;
  const next = () => {
    state = (state * 1103515245 + 12345) % 2147483648;
    return state / 2147483648;
  };
  let x = from;
  while (x < PLOT_WIDTH) {
    const r = next();
    points.push([x, Math.round(level(x) + (r < 0.2 ? swing : r > 0.8 ? -swing : 0))]);
    x += 3 + Math.floor(next() * 7);
  }
  return points;
};

interface GraphSpec {
  title: string;
  titleHeight: number;
  plotHeight?: number;
  after: number;
  shade?: boolean;
  shift?: boolean;
  /** the trace stops before the right edge */
  partial?: boolean;
  phase: number;
  line: string;
  fill: string;
  swatch?: string;
  swatchTop?: number;
  max: string;
  now: string;
  min: string;
  points: Point[];
}

const graphs: GraphSpec[] = [
  {
    title: "P-core 0 T0 Effective Clock", titleHeight: 57, plotHeight: 208, after: 0, phase: 16,
    line: "#00ff37", fill: "#97ffa4", max: "4000.0", now: "2,295.0 MHz", min: "0.0",
    points: [[76, 206], [88, 163], [92, 22], [100, 40], [103, 103], [107, 29], [110, 22], [133, 21], [141, 26], [145, 92], ...jitter(150, (x) => (x < 250 ? 91 : 90), 1, 7)],
  },
  {
    title: "E-core 8 T0 Effective Clock", titleHeight: 51, plotHeight: 260, after: 0, shade: true, phase: 18,
    line: "#00ff00", fill: "#97ff97", swatch: "#00ff00", swatchTop: 21, max: "4000.0", now: "1,968.5 MHz", min: "0.0",
    points: [[75, 258], [87, 169], [90, 80], [96, 78], [99, 118], [102, 112], [105, 75], [118, 74], [140, 85], [144, 139], ...jitter(148, (x) => (x < 300 ? 136 : 134), 2, 21)],
  },
  {
    title: "CPU Package Temperature", titleHeight: 52, plotHeight: 255, after: 0, shade: true, phase: 18,
    line: "#ff0000", fill: "#ff9797", swatch: "#ff0000", swatchTop: 17, max: "110", now: "68 °C", min: "0",
    points: [[78, 165], [84, 168], [88, 85], [90, 89], [94, 80], [97, 82], [99, 141], [103, 78], [107, 73], [109, 71], [112, 66], [116, 64], [121, 62], [127, 59], [136, 55], [141, 89], [144, 110], [149, 106], [152, 110], [162, 112], [190, 115], [194, 112], [209, 110], [214, 115], [218, 108], [241, 111], [251, 106], [253, 109], [259, 110], [292, 108], [304, 103], [323, 101], [337, 98], [353, 95], [369, 101], [373, 95], [381, 101], [404, 98], [406, 102], [445, 98], [452, 95], [455, 98], [479, 101], [490, 103], [508, 107], [514, 102], [520, 98],
      ...jitter(530, (x) => 100 + 3 * Math.sin(x / 55) + 1.5 * Math.sin(x / 17), 2, 5)],
  },
  {
    title: "CPU Package Power", titleHeight: 51, plotHeight: 255, after: 13, shade: true, phase: 18,
    line: "#0080ff", fill: "#97b1ff", swatch: "#0080ff", swatchTop: 17, max: "150.000", now: "35.159 W", min: "0.000",
    points: [[79, 250], [88, 217], [92, 121], [100, 133], [102, 168], [107, 120], [141, 126], [145, 198], ...jitter(160, () => 196, 1, 11)],
  },
  {
    title: "GPU Clock", titleHeight: 55, plotHeight: 255, after: 4, shift: true, phase: 4,
    line: "#80ff00", fill: "#b0ff94", swatch: "#80ff00", swatchTop: 17, max: "3000.0", now: "600.0 MHz", min: "0.0",
    points: [[1263, 185], [1264, 205], [1275, 231], [1280, 205], [PLOT_WIDTH, 205]],
  },
  {
    title: "GPU Global Temperature", titleHeight: 56, plotHeight: 255, after: 2, phase: 2,
    line: "#ff0080", fill: "#ff97b1", swatch: "#ff0080", swatchTop: 17, max: "110.0", now: "0.0 °C", min: "0.0",
    points: [[82, 253], [88, 153], [97, 151], [101, 148], [106, 146], [109, 144], [112, 139], [118, 137], [125, 134], [130, 132], [136, 130], [144, 132], [151, 134], [183, 139], [187, 134], [189, 139], [194, 134], [196, 253],
      [1069, 125], [1078, 123], [1080, 125], [1085, 121], [1095, 125], [1102, 121], [1114, 125], [1117, 121], [1119, 125], [1123, 127], [1127, 125], [1173, 253], [PLOT_WIDTH, 253]],
  },
  {
    title: "Total GPU Power", titleHeight: 54, after: 0, shade: true, partial: true, phase: 9,
    line: "#0000ff", fill: "#9797ff", swatch: "#0000ff", swatchTop: 17, max: "150.000", now: "0.618 W", min: "0.000",
    points: [[1270, 249], [1274, 249]],
  },
];

const stepPath = (points: Point[]) => {
  const [first, ...rest] = points;
  return rest.reduce((d, [x, y]) => `${d}H${x}V${y}`, `M${first[0]} ${first[1]}`);
};

const Graph = ({ spec, index }: { spec: GraphSpec; index: number }) => {
  const height = spec.plotHeight ?? 255;
  const gridId = `grid${index}`;
  const last = spec.points[spec.points.length - 1][0];
  const end = spec.partial ? last : PLOT_WIDTH;
  const trace = `${stepPath(spec.points)}H${end}`;
  return (
    <svg height={height} viewBox={`0 0 ${PLOT_WIDTH} ${height}`} preserveAspectRatio="none" shapeRendering="crispEdges" role="img" aria-label={spec.title}>
      <defs>
        <pattern id={gridId} width="20" height="20" x={spec.phase} y={(height - 2) % 20} patternUnits="userSpaceOnUse">
          <path d="M0.500 0V20M0 0.500H20" stroke="#a9c4e8" strokeWidth="1" />
        </pattern>
      </defs>
      <path d={`${trace}V${height}H${spec.points[0][0]}z`} fill={spec.fill} />
      <rect width={PLOT_WIDTH} height={height} fill={`url(#${gridId})`} />
      <path d={trace} fill="none" stroke={spec.line} strokeWidth="1" />
    </svg>
  );
};

const GraphPanel = ({ spec, index }: { spec: GraphSpec; index: number }) => (
  <GraphWindow $shade={spec.shade} $after={spec.after} $shift={spec.shift} $fill={!spec.plotHeight}>
    <GraphTitle $height={spec.titleHeight}>
      <AppLogo />
      <TitleText>{spec.title}</TitleText>
      <CaptionButton type="button" $width={66} aria-label="Close"><CloseGlyph /></CaptionButton>
    </GraphTitle>
    <GraphBody $height={spec.plotHeight}>
      <Plot><Graph spec={spec} index={index} /></Plot>
      <Side>
        <Reading aria-label="Upper limit" defaultValue={spec.max} />
        {spec.swatch && (
          <Swatches $top={spec.swatchTop ?? 17}>
            <Swatch type="button" aria-label="Line colour" $color={spec.swatch} />
            <Swatch type="button" aria-label="Background colour" $color="#dff6fd" />
            <Swatch type="button" aria-label="Grid colour" $color="#abc4e8" />
          </Swatches>
        )}
        <Reading aria-label="Current value" readOnly value={spec.now} $top={spec.swatch ? 9 : 6} />
        <SideButtons>
          <SideButton type="button" $width={73}>Auto Fit</SideButton>
          <SideButton type="button" $width={56}>Reset</SideButton>
        </SideButtons>
        <Reading aria-label="Lower limit" defaultValue={spec.min} $top={23} $push={Boolean(spec.plotHeight)} />
      </Side>
    </GraphBody>
  </GraphWindow>
);

/* ---------- composed sections ---------- */

const Usage = ({ label, value, heat, caption, size, stroke, color }: { label: string; value: string; heat: string; caption: string; size: number; stroke: number; color: string }) => (
  <Gauge>
    <GaugeTop>
      <RingSlot><Ring $size={size} $stroke={stroke} $color={color}>{value}</Ring></RingSlot>
      <GaugeSide>
        <strong>{label}</strong>
        <Heat><TubeIcon />{heat}</Heat>
      </GaugeSide>
    </GaugeTop>
    <figcaption>{caption}</figcaption>
  </Gauge>
);

const ControlCentre = () => (
  <Control>
    <ControlPart $inset={10} $ruled>
      <h3>Usage</h3>
      <Gauges>
        <Usage label="CPU" value="100%" heat="69°C" caption="12th Gen Intel(R) Core(TM) i7-12700H" size={178} stroke={21} color="#ffa200" />
        <Usage label="dGPU" value="0%" heat="N/A" caption="Intel(R) Arc(TM) A730M Graphics" size={167} stroke={11} color="#3e5268" />
      </Gauges>
    </ControlPart>
    <ControlPart $inset={92}>
      <h3>Fan Speed</h3>
      <Fans>
        <FanReading>Left Fan:<br />2513 RPM</FanReading>
        <FanPair><FanIcon /><FanIcon /></FanPair>
        <FanReading>Right Fan:<br />2582 RPM</FanReading>
      </Fans>
    </ControlPart>
  </Control>
);

const PowerMax = () => (
  <PowerWindow>
    <PowerTitle>
      <FlameIcon />
      <TitleText>powerMAX</TitleText>
      <Captions>
        <CaptionButton type="button" aria-label="Minimize"><MinGlyph /></CaptionButton>
        <CaptionButton type="button" aria-label="Maximize" disabled><MaxGlyph faint /></CaptionButton>
        <CaptionButton type="button" aria-label="Close"><CloseGlyph /></CaptionButton>
      </Captions>
    </PowerTitle>
    <PowerForm>
      <FormRows $above={16}>
        <FieldLabel htmlFor="cpu">CPU</FieldLabel>
        <SelectBox><Select id="cpu"><option>AVX</option></Select><SelectArrow /></SelectBox>
        <TextButton type="button">Stop</TextButton>
        <FieldLabel htmlFor="gpu">GPU</FieldLabel>
        <SelectBox><Select id="gpu"><option>1024 x 576</option></Select><SelectArrow /></SelectBox>
        <TextButton type="button">Start</TextButton>
      </FormRows>
      <FormRows $above={30}>
        <FieldLabel htmlFor="timeout">Timeout</FieldLabel>
        <SelectBox $off><Select id="timeout" disabled><option>None</option></Select><SelectArrow /></SelectBox>
        <CheckLine>Full Screen<CheckBox type="checkbox" /></CheckLine>
      </FormRows>
      <PowerFooter>
        <span>Version 1.00.1</span>
        <TextButton type="button">About</TextButton>
        <TextButton type="button">Close</TextButton>
      </PowerFooter>
    </PowerForm>
  </PowerWindow>
);

export default function App() {
  return (
    <>
      <GlobalStyle />
      <SharedDefs />
      <Desktop>
        <LeftColumn>
          <MainWindow>
            <MainTitle>
              <AppLogo />
              <TitleText as="h1">HWiNFO64 v7.46-5110 Sensor Status [284 values hidden]</TitleText>
              <Captions>
                <CaptionButton type="button" aria-label="Minimize"><MinGlyph /></CaptionButton>
                <CaptionButton type="button" aria-label="Maximize"><MaxGlyph /></CaptionButton>
                <CaptionButton type="button" aria-label="Close"><CloseGlyph /></CaptionButton>
              </Captions>
            </MainTitle>
            <Panes>
              <Pane>
                <SensorList sensors={leftSensors} columns={[460, 146, 134, 145, 138]} lead={0} headHeight={34} tail={4} />
              </Pane>
              <Pane $framed>
                <SensorList sensors={rightSensors} columns={[496, 145, 131, 137, 133]} lead={3} headHeight={33} tail={5} emptyRows={6} />
              </Pane>
            </Panes>
            <Toolbar>
              <ToolGroup $gap={4}>
                <ToolButton type="button" $flush aria-label="Expand columns"><ExpandIcon /></ToolButton>
                <ToolButton type="button" aria-label="Shrink columns"><ShrinkIcon /></ToolButton>
              </ToolGroup>
              <ToolGroup $gap={8}>
                <ToolGroup $gap={21}>
                  <ToolButton type="button" aria-label="Sensor details"><SearchMonitorIcon /></ToolButton>
                  <ToolButton type="button" aria-label="Remote monitoring"><NetworkIcon /></ToolButton>
                </ToolGroup>
                <Elapsed>0:16:03</Elapsed>
                <ToolButton type="button" aria-label="Reset clock"><BigClockIcon /></ToolButton>
                <ToolButton type="button" aria-label="Start logging"><ReportIcon /></ToolButton>
                <ToolButton type="button" aria-label="Settings"><GearIcon /></ToolButton>
                <ToolButton type="button" aria-label="Exit"><CrossIcon /></ToolButton>
              </ToolGroup>
            </Toolbar>
          </MainWindow>
          <Lower>
            <ControlCentre />
            <PowerMax />
          </Lower>
        </LeftColumn>
        <RightColumn>
          {graphs.map((spec, i) => <GraphPanel key={spec.title} spec={spec} index={i} />)}
        </RightColumn>
      </Desktop>
    </>
  );
}
